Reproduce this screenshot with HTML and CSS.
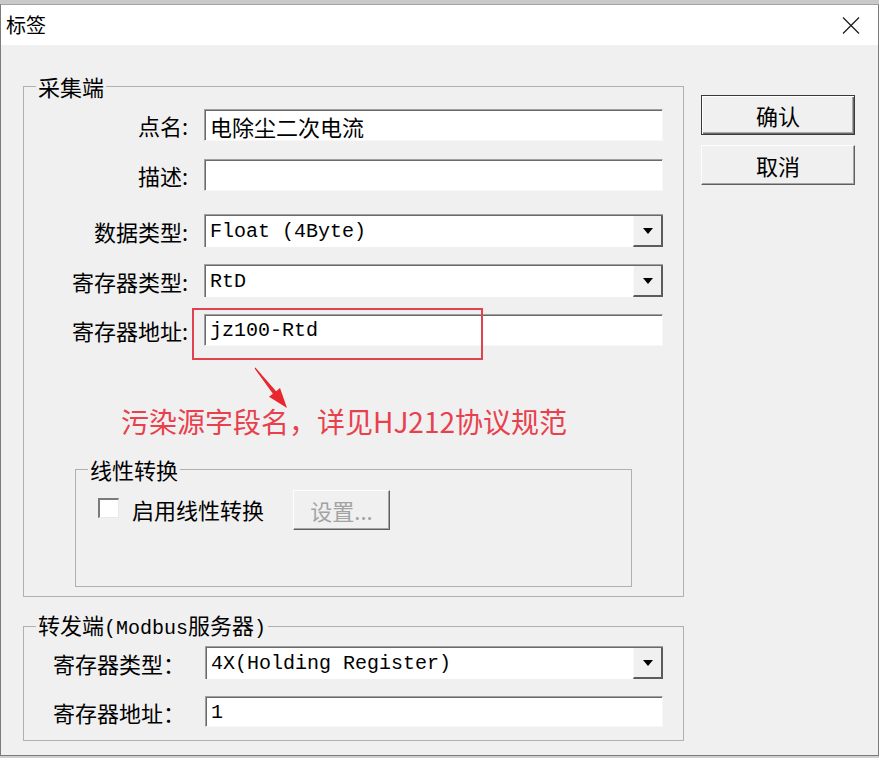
FILE: index.html
```html
<!DOCTYPE html>
<html lang="zh-CN">
<head>
<meta charset="utf-8">
<title>标签</title>
<link rel="stylesheet" href="styles.css">
</head>
<body>
<div class="strip-top"></div>
<div class="window">
  <div class="titlebar">
    <span class="title">标签</span>
    <svg class="close" width="18" height="17" viewBox="0 0 18 17"><path d="M1 0.5 L17 16.5 M17 0.5 L1 16.5" stroke="#1a1a1a" stroke-width="1.2" fill="none"/></svg>
  </div>
  <div class="client">
    <div class="groups">
      <fieldset class="group group-main">
        <legend>采集端</legend>
        <div class="rows">
          <div class="row"><span class="lbl">点名:</span><div class="edit"><span class="val cjk">电除尘二次电流</span></div></div>
          <div class="row r2"><span class="lbl">描述:</span><div class="edit"></div></div>
          <div class="row r3"><span class="lbl">数据类型:</span><div class="combo"><span class="val mono">Float (4Byte)</span><span class="drop"><svg width="10" height="6" viewBox="0 0 10 6"><path d="M0 0 H10 L5 6 Z" fill="#000"/></svg></span></div></div>
          <div class="row r4"><span class="lbl">寄存器类型:</span><div class="combo"><span class="val mono">RtD</span><span class="drop"><svg width="10" height="6" viewBox="0 0 10 6"><path d="M0 0 H10 L5 6 Z" fill="#000"/></svg></span></div></div>
          <div class="row r5"><span class="lbl">寄存器地址:</span><div class="edit"><span class="val mono">jz100-Rtd</span></div></div>
        </div>
        <div class="note">污染源字段名，详见HJ212协议规范</div>
        <fieldset class="group group-linear">
          <legend>线性转换</legend>
          <div class="linear-row">
            <span class="check"></span>
            <span class="check-label">启用线性转换</span>
            <button class="btn btn-disabled" type="button">设置...</button>
          </div>
        </fieldset>
      </fieldset>
      <fieldset class="group group-fwd">
        <legend>转发端<span class="mono legend-mono">(Modbus</span>服务器<span class="mono legend-mono">)</span></legend>
        <div class="fwd-row"><span class="lbl2">寄存器类型：</span><div class="combo combo-fwd"><span class="val mono">4X(Holding Register)</span><span class="drop"><svg width="10" height="6" viewBox="0 0 10 6"><path d="M0 0 H10 L5 6 Z" fill="#000"/></svg></span></div></div>
        <div class="fwd-row fr2"><span class="lbl2">寄存器地址：</span><div class="edit edit-fwd"><span class="val mono">1</span></div></div>
      </fieldset>
    </div>
    <div class="buttons">
      <button class="btn btn-default" type="button">确认</button>
      <button class="btn btn-cancel" type="button">取消</button>
    </div>
  </div>
</div>
<div class="anno-rect"></div>
<svg class="anno-arrow" width="60" height="55" viewBox="0 0 60 55"><polygon points="10.4,7.6 31.1,31.2 35,28 42,48 24,36.8 27.9,33.7 9.6,8.4" fill="#e8282e"/></svg>
</body>
</html>
```

FILE: styles.css
```css
* { box-sizing: border-box; }

html, body {
  margin: 0;
  padding: 0;
}

body {
  position: relative;
  width: 879px;
  height: 758px;
  overflow: hidden;
  background: #cfcfcf;
  font-family: "Noto Sans CJK SC", "Noto Sans", sans-serif;
  font-size: 22px;
  color: #000;
}

.strip-top {
  height: 4px;
  background: #c9c9c9;
}

.window {
  width: 879px;
  border: 1px solid #7b7b7b;
  border-top-color: #a3a3a3;
  background: #f0f0f0;
}

.titlebar {
  height: 40px;
  background: #fff;
  display: flex;
  align-items: center;
  justify-content: space-between;
  padding: 0 18px 0 5px;
}

.title {
  font-size: 20px;
  line-height: 24px;
}

.close {
  display: block;
  margin-top: 1px;
}

.client {
  height: 710px;
  display: flex;
  padding: 29px 0 0 22px;
}

.groups {
  width: 661px;
  display: flex;
  flex-direction: column;
}

.group {
  margin: 0;
  border: 1px solid #b0b0b0;
  min-width: 0;
}

.group legend {
  margin-left: 12px;
  padding: 0 2px;
  font-size: 22px;
  line-height: 24px;
}

.group-main {
  width: 661px;
  padding: 11px 0 9px 0;
}

.rows {
  display: flex;
  flex-direction: column;
}

.row {
  display: flex;
  align-items: center;
}

.r2 { margin-top: 18px; }
.r3 { margin-top: 23px; }
.r4 { margin-top: 17px; }
.r5 { margin-top: 17px; }

.lbl {
  width: 164px;
  margin-right: 16px;
  text-align: right;
  line-height: 24px;
  white-space: nowrap;
}

.edit,
.combo {
  width: 459px;
  height: 32px;
  background: #fff;
  border: 1px solid;
  border-color: #a0a0a0 #f7f7f7 #f7f7f7 #a0a0a0;
  box-shadow: inset 1px 1px 0 #6a6a6a;
  display: flex;
  align-items: center;
  padding-left: 5px;
  overflow: hidden;
}

.combo {
  height: 33px;
  border-right: 0;
  border-bottom: 0;
  padding-right: 0;
}

.val {
  white-space: pre;
  line-height: 24px;
}

.cjk {
  font-size: 22px;
  margin-top: 1px;
}

.mono {
  font-family: "Liberation Mono", "Noto Sans CJK SC", monospace;
  font-size: 20px;
}

.val.mono {
  margin-top: 2px;
}

.drop {
  margin-left: auto;
  align-self: stretch;
  width: 30px;
  margin-top: 1px;
  background: #f0f0f0;
  border-left: 1px solid #fafafa;
  border-right: 2px solid #5c5c5c;
  border-bottom: 2px solid #5c5c5c;
  display: flex;
  align-items: center;
  justify-content: center;
}

.drop svg { display: block; }

.note {
  margin: 55px 0 0 97px;
  font-size: 28px;
  line-height: 40px;
  color: #e8414d;
  white-space: nowrap;
}

.group-linear {
  width: 557px;
  margin: 16px 0 0 51px;
  padding: 9px 0 56px 0;
}

.linear-row {
  display: flex;
  align-items: center;
  height: 40px;
  padding-left: 22px;
}

.check {
  width: 21px;
  height: 20px;
  margin-top: -4px;
  background: #fff;
  border-top: 2px solid #7a7a7a;
  border-left: 2px solid #7a7a7a;
  border-right: 1px solid #e8e8e8;
  border-bottom: 1px solid #e8e8e8;
}

.check-label {
  margin-left: 13px;
  line-height: 24px;
  margin-top: -2px;
}

.btn {
  font-family: "Noto Sans CJK SC", "Noto Sans", sans-serif;
  font-size: 22px;
  line-height: 24px;
  color: #000;
  background: #f0f0f0;
  padding: 0;
  margin: 0;
}

.btn-disabled {
  width: 97px;
  height: 40px;
  margin-left: 29px;
  color: #a3a3a3;
  border: 1px solid;
  border-color: #fdfdfd #5f5f5f #5f5f5f #fdfdfd;
  box-shadow: inset -1px -1px 0 #a5a5a5;
}

.group-fwd {
  width: 661px;
  margin-top: 15px;
  padding: 5px 0 13px 0;
}

.legend-mono {
  font-size: 20px;
}

.fwd-row {
  display: flex;
  align-items: center;
  padding-left: 29px;
}

.fr2 { margin-top: 17px; }

.lbl2 {
  width: 152px;
  line-height: 24px;
  white-space: nowrap;
}

.combo-fwd { width: 458px; }

.edit-fwd {
  width: 458px;
  height: 31px;
}

.buttons {
  display: flex;
  flex-direction: column;
  gap: 10px;
  margin: 21px 0 0 17px;
}

.btn-default,
.btn-cancel {
  width: 154px;
  height: 40px;
}

.btn-default {
  border: 1px solid #3a3a3a;
  box-shadow: inset 1px 1px 0 #fff, inset -1px -1px 0 #6a6a6a, inset -2px -2px 0 #a8a8a8;
}

.btn-cancel {
  border: 1px solid;
  border-color: #fdfdfd #5f5f5f #5f5f5f #fdfdfd;
  box-shadow: inset -1px -1px 0 #a5a5a5;
}

.anno-rect {
  position: absolute;
  left: 192px;
  top: 308px;
  width: 291px;
  height: 52px;
  border: 2px solid #e2424f;
}

.anno-arrow {
  position: absolute;
  left: 245px;
  top: 360px;
}
```
